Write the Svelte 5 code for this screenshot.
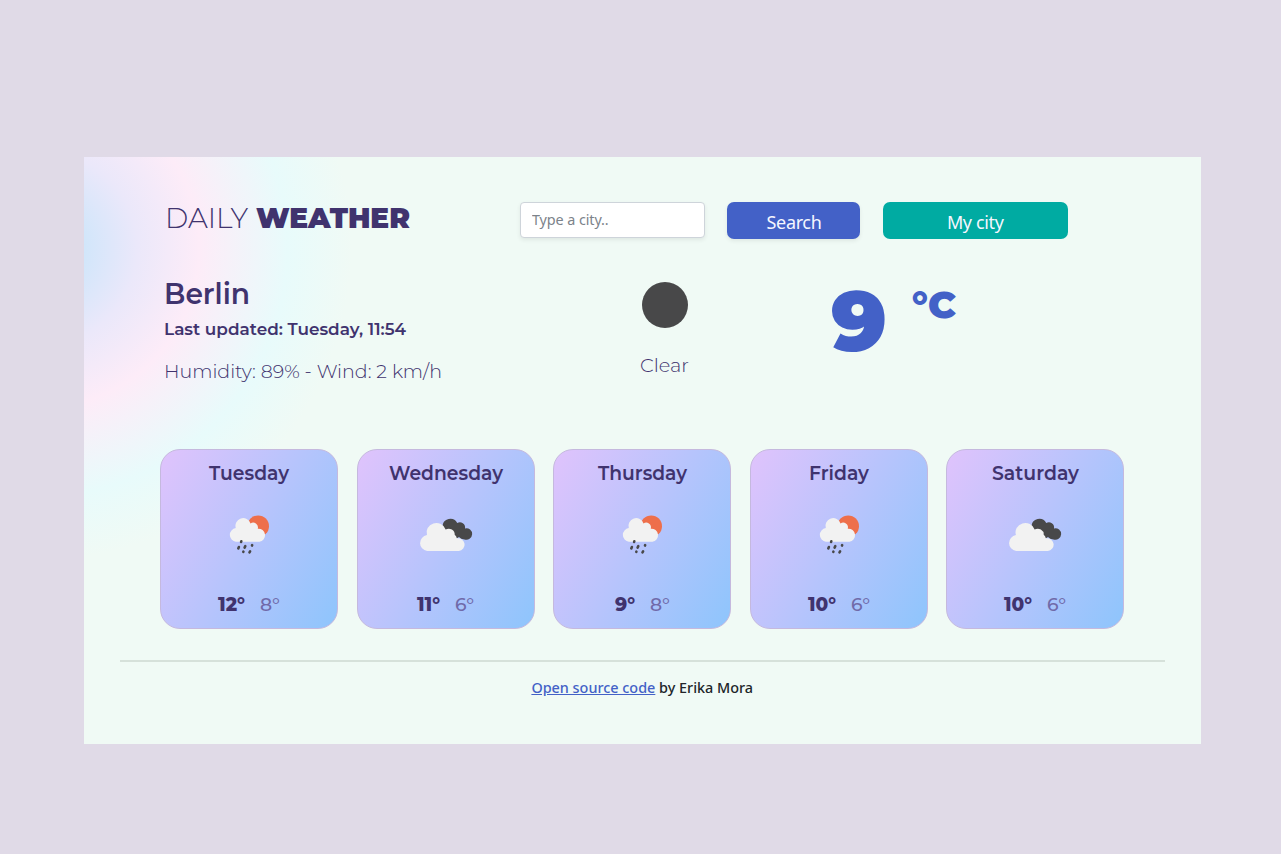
<script>
  const days = [
    { name: 'Tuesday', w: 80, icon: 'rain', hi: '12°', hw: 27, lo: '8°', lw: 20 },
    { name: 'Wednesday', w: 114, icon: 'cloud', hi: '11°', hw: 23, lo: '6°', lw: 19 },
    { name: 'Thursday', w: 89, icon: 'rain', hi: '9°', hw: 20, lo: '8°', lw: 20 },
    { name: 'Friday', w: 60, icon: 'rain', hi: '10°', hw: 28, lo: '6°', lw: 19 },
    { name: 'Saturday', w: 87, icon: 'cloud', hi: '10°', hw: 28, lo: '6°', lw: 19 }
  ];
</script>

{#snippet label(text, width, size, weight, color = '#40336e')}
  <svg class="label" {width} height={size} font-size={size} font-weight={weight} fill={color}>
    <text x="0" y={size * 0.8} textLength={width} lengthAdjust="spacingAndGlyphs">{text}</text>
  </svg>
{/snippet}

<main class="app">
  <header>
    <h1>{@render label('DAILY', 83, 28.4, 300)}{@render label('WEATHER', 154, 28.4, 900)}</h1>
    <form onsubmit={(e) => e.preventDefault()}>
      <input type="text" placeholder="Type a city.." />
      <button class="search">Search</button>
      <button class="mine" type="button">My city</button>
    </form>
  </header>

  <section class="current">
    <div class="place">
      <h2>{@render label('Berlin', 86, 29, 600)}</h2>
      <p class="updated">{@render label('Last updated: Tuesday, 11:54', 242, 17.3, 600)}</p>
      <p class="details">{@render label('Humidity: 89% - Wind: 2 km/h', 278, 19.5, 350)}</p>
    </div>
    <div class="sky">
      <div class="moon"></div>
      {@render label('Clear', 49, 19.5, 350)}
    </div>
    <div class="temp">
      {@render label('9', 56, 84, 900, '#4361c7')}
      <span class="unit">{@render label('°C', 44, 37, 900, '#4361c7')}</span>
    </div>
  </section>

  <section class="forecast">
    {#each days as d}
      <article>
        {@render label(d.name, d.w, 19.5, 600)}
        <svg class="icon" width="80" height="80" viewBox="0 0 80 80">
          {#if d.icon === 'rain'}
            <circle cx="49.2" cy="33.2" r="10.8" fill="#ee6f4b" />
            <path fill="#f2f2f2" d="M27 48.8a6.9 6.9 0 0 1-.2-13.7 7.6 7.6 0 0 1 14.7-4.6 4.8 4.8 0 0 1 7.3 5.2 6.6 6.6 0 0 1 1.6 13.1z" />
            <g stroke="#484849" stroke-width="2.6" stroke-linecap="round">
              <path d="M32.3 48.2l-.2.8M29.9 54l-.6 1.4M36.3 53.2l-.7 1.4M43.2 52.1l-.2.5M34.4 58.6l-.1.2M41.1 58.4l-.6 1" />
            </g>
          {:else}
            <path fill="#484849" d="M36.4 33.2a7.9 7.9 0 0 1 14.8-3.2 5.2 5.2 0 0 1 7.8 5.4 5.8 5.8 0 1 1-.6 11.1q-3.6-.1-5.4-2.5l-5 3-8-6z" />
            <path fill="#f2f2f2" d="M19.4 57.6a8.2 8.2 0 0 1-.2-16.1 9.2 9.2 0 0 1 17.7-5.5 5.7 5.7 0 0 1 8.6 5.3 5.5 5.5 0 0 1 2 3.4 6.5 6.5 0 0 1 1.8 12.9z" transform="translate(.7 .5) scale(1.055 1)" />
          {/if}
        </svg>
        <div class="range">
          {@render label(d.hi, d.hw, 19, 800)}
          {@render label(d.lo, d.lw, 19.2, 500, '#706aa9')}
        </div>
      </article>
    {/each}
  </section>

  <footer><a href="#source">Open source code</a> by Erika Mora</footer>
</main>

<style>
  :global(body) { background: #e0dae7; }
  .app {
    box-sizing: border-box;
    width: 1116.5px;
    height: 586.5px;
    margin: 157px 0 110px 84px;
    padding: 45px 36px 0;
    background: radial-gradient(circle at -4% 15.5%, #cfe4fb 0, #d2e6fa 46px, #ebe8fa 98px, #fdecf8 160px, #e8fbfb 248px, #f0faf5 312px);
    font-family: "Noto Sans", sans-serif;
    overflow: hidden;
  }
  .label {
    display: block;
    flex: none;
    overflow: visible;
    font-family: Montserrat, Inter, sans-serif;
  }
  header { display: flex; height: 37px; padding-left: 45px; }
  h1 { display: flex; gap: 8px; margin: 3.3px 0 0; width: 355px; }
  h2, p { margin: 0; }
  form { display: flex; align-items: flex-start; }
  input {
    box-sizing: border-box;
    width: 185px;
    height: 36px;
    margin-right: 22px;
    padding: 0 11px 1px;
    border: 1px solid #ced4da;
    border-radius: 4px;
    background: #fff;
    box-shadow: 0 2px 4px rgba(0, 0, 0, .075);
    font: 14.4px "Noto Sans", sans-serif;
    letter-spacing: -.1px;
  }
  input::placeholder { color: #7c838a; }
  button {
    height: 37px;
    padding: 2px 0 0;
    border: 0;
    border-radius: 7px;
    color: #f5f7ff;
    font: 18px "Noto Sans", sans-serif;
    letter-spacing: -.35px;
  }
  .search { width: 133px; margin-right: 22.5px; padding-left: 1px; background: #4361c7; box-shadow: 0 2px 4px rgba(0, 0, 0, .075); }
  .mine { width: 185.5px; background: #00aba2; }
  .current { display: flex; height: 168px; margin-top: 42px; padding-left: 44.4px; }
  .place { width: 475.6px; }
  h2 { margin-top: -.5px; }
  .updated { margin-top: 11.5px; }
  .details { margin-top: 23.8px; }
  .sky { width: 191px; }
  .moon { width: 46px; height: 46px; margin: 1px 0 28px 2px; border-radius: 50%; background: #484849; }
  .temp { display: flex; gap: 25px; padding-top: 2.5px; }
  .unit { margin-top: 4.5px; }
  .forecast { display: grid; grid-template-columns: repeat(5, 178px); gap: 18.6px; padding-left: 40px; }
  article {
    display: flex;
    flex-direction: column;
    align-items: center;
    box-sizing: border-box;
    height: 180px;
    padding-top: 14px;
    border: 1px solid #c5b9de;
    border-radius: 20px;
    background: linear-gradient(120deg, #e0c3fc 0%, #8ec5fc 100%);
  }
  .icon { margin-top: 9.5px; }
  .range { display: flex; gap: 15px; margin-top: 22.5px; }
  footer {
    margin-top: 31px;
    padding-top: 16px;
    border-top: 2px solid #d6e1da;
    text-align: center;
    font-size: 14.4px;
    font-weight: 500;
    letter-spacing: 0;
    color: #212529;
  }
  a { color: #4361c7; text-underline-offset: 1px; }
</style>
